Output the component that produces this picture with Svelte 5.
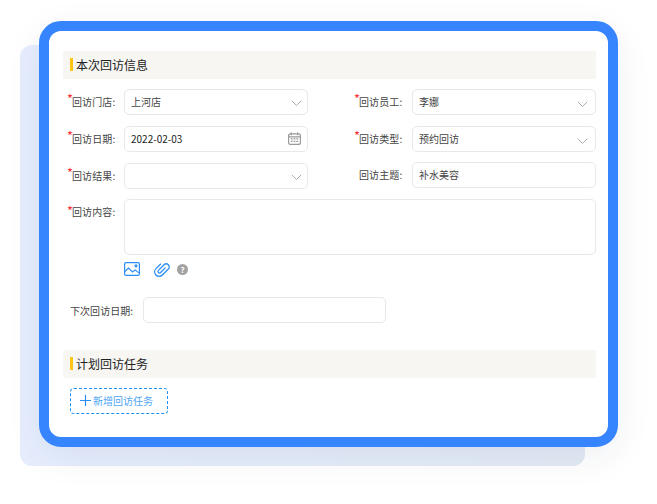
<script>
  const chevron = 'M1 1l6 6 6-6';
</script>

<div class="stage">
  <div class="backdrop"></div>
  <div class="card">
    <div class="inner">
      <h2 class="section"><span class="bar"></span>本次回访信息</h2>

      <div class="grid">
        <div class="field">
          <span class="label req">回访门店:</span>
          <div class="box">上河店
            <svg class="chev" viewBox="0 0 14 8" width="11" height="6.300"><path d={chevron} /></svg>
          </div>
        </div>
        <div class="field">
          <span class="label req">回访员工:</span>
          <div class="box">李娜
            <svg class="chev" viewBox="0 0 14 8" width="11" height="6.300"><path d={chevron} /></svg>
          </div>
        </div>
        <div class="field">
          <span class="label req">回访日期:</span>
          <div class="box date">2022-02-03
            <svg class="cal" viewBox="0 0 14 14" width="13" height="13">
              <rect x="0.6" y="2" width="12.8" height="11.4" rx="2" />
              <path d="M0.6 5.2h12.8M3.6 0.5v3M10.4 0.5v3" />
              <path class="dots" d="M3 7.5h2M6 7.5h2M9 7.5h2M3 10h2M6 10h2M9 10h2" />
            </svg>
          </div>
        </div>
        <div class="field">
          <span class="label req">回访类型:</span>
          <div class="box">预约回访
            <svg class="chev" viewBox="0 0 14 8" width="11" height="6.300"><path d={chevron} /></svg>
          </div>
        </div>
        <div class="field">
          <span class="label req">回访结果:</span>
          <div class="box">
            <svg class="chev" viewBox="0 0 14 8" width="11" height="6.300"><path d={chevron} /></svg>
          </div>
        </div>
        <div class="field up">
          <span class="label">回访主题:</span>
          <div class="box">补水美容</div>
        </div>
      </div>

      <div class="content">
        <span class="label req top">回访内容:</span>
        <div class="main">
          <div class="textarea"></div>
          <div class="tools">
            <svg class="tool" viewBox="0 0 16 14" width="16" height="14">
              <rect x="0.6" y="0.6" width="14.8" height="12.8" rx="1.5" />
              <path d="M0.8 9.500l3.700-3.400 4 3.800 2.600-2 3.800 3" />
              <circle cx="12" cy="3.800" r="1" />
            </svg>
            <svg class="tool clip" viewBox="0 0 16 16" width="16" height="16">
              <path transform="rotate(45 8 8)" d="M9.500 4.500V11.500a1.500 1.500 0 0 1-3 0V3.500a3 3 0 0 1 6 0V12a4.500 4.500 0 0 1-9 0V5" />
            </svg>
            <span class="help">?</span>
          </div>
        </div>
      </div>

      <div class="next">
        <span class="next-label">下次回访日期:</span>
        <div class="box next-box"></div>
      </div>

      <h2 class="section second"><span class="bar"></span>计划回访任务</h2>

      <div class="add">
        <svg viewBox="0 0 11 11" width="11" height="11"><path d="M5.500 0v11M0 5.500h11" /></svg>
        新增回访任务
      </div>
    </div>
  </div>
</div>

<style>
  :global(body) {
    margin: 0;
    background: #fff;
  }

  .stage {
    position: relative;
    width: 657px;
    height: 504px;
    overflow: hidden;
    padding: 21px 0 0 39px;
    box-sizing: border-box;
    font-family: "Noto Sans CJK SC", "Noto Sans", sans-serif;
    font-size: 10px;
    color: #333;
  }

  .backdrop {
    position: absolute;
    left: 20px;
    top: 45px;
    width: 565px;
    height: 421px;
    border-radius: 12px;
    background: linear-gradient(90deg, #e6eefe 0%, #e3eaf5 100%);
  }

  .card {
    position: relative;
    width: 579px;
    height: 426px;
    box-sizing: border-box;
    border: 10px solid #3685fe;
    border-radius: 22px;
    background: #fff;
    box-shadow: 0 10px 36px rgba(30, 40, 70, 0.07);
  }

  .inner {
    padding: 20px 12px 0 14px;
  }

  .section {
    display: flex;
    align-items: center;
    height: 28px;
    box-sizing: border-box;
    margin: 0;
    padding: 0 0 1px 7px;
    border-radius: 2px;
    background: #f7f6f2;
    font-size: 12px;
    font-weight: 400;
    color: #222;
  }

  .bar {
    width: 3px;
    height: 13px;
    margin-right: 3px;
    background: #fec514;
  }

  .second {
    margin-top: 27px;
  }

  .grid {
    display: grid;
    grid-template-columns: 245px 246px;
    column-gap: 42px;
    row-gap: 11px;
    margin-top: 10px;
  }

  .field {
    display: flex;
    align-items: center;
    height: 26px;
  }

  .field:nth-child(even) .label {
    flex-basis: 62px;
  }

  .field:nth-child(even) .chev {
    right: 7px;
    top: 11px;
  }

  .up {
    margin-top: -1px;
  }

  .label {
    position: relative;
    flex: 0 0 61px;
    padding-left: 9px;
    padding-bottom: 1px;
    box-sizing: border-box;
    white-space: nowrap;
    letter-spacing: 0.1px;
    color: #444;
  }

  .req::before {
    content: "*";
    position: absolute;
    left: 4px;
    top: -2px;
    color: #f5323c;
    font-size: 13px;
    line-height: 14px;
  }

  .box {
    position: relative;
    flex: 1;
    height: 26px;
    box-sizing: border-box;
    padding-left: 6px;
    border: 1px solid #e8e8e8;
    border-radius: 5px;
    background: #fff;
    line-height: 24px;
    color: #444;
  }

  .date {
    color: #222;
  }

  .chev {
    position: absolute;
    right: 5px;
    top: 10px;
    fill: none;
    stroke: #a8a8a8;
    stroke-width: 1.200;
  }

  .cal {
    position: absolute;
    right: 6px;
    top: 5px;
    fill: none;
    stroke: #999;
    stroke-width: 1.300;
  }

  .cal .dots {
    stroke-width: 1.400;
  }

  .content {
    display: flex;
    margin-top: 10px;
  }

  .top {
    padding-top: 6px;
    line-height: 14px;
  }

  .top::before {
    top: 5px;
  }

  .main {
    flex: 1;
  }

  .textarea {
    height: 56px;
    box-sizing: border-box;
    border: 1px solid #e8e8e8;
    border-radius: 5px;
  }

  .tools {
    display: flex;
    align-items: center;
    height: 16px;
    margin-top: 6px;
  }

  .tool {
    fill: none;
    stroke: #2b8ef5;
    stroke-width: 1.200;
  }

  .clip {
    margin-left: 14px;
    stroke-width: 1.300;
  }

  .help {
    width: 11px;
    height: 11px;
    margin-left: 7px;
    border-radius: 50%;
    background: #a2a2a2;
    color: #fff;
    font-size: 8px;
    font-weight: 700;
    line-height: 11px;
    text-align: center;
  }

  .next {
    display: flex;
    align-items: center;
    margin-top: 20px;
    padding-left: 7px;
  }

  .next-label {
    flex: 0 0 73px;
    white-space: nowrap;
    letter-spacing: 0.05px;
    color: #444;
  }

  .next-box {
    flex: 0 0 243px;
  }

  .add {
    display: flex;
    align-items: center;
    gap: 2px;
    width: 98px;
    height: 26px;
    box-sizing: border-box;
    margin: 10px 0 0 7px;
    padding: 0 0 1px 9px;
    border: 1px dashed #1c90f3;
    border-radius: 4px;
    color: #4ea5f5;
  }

  .add svg {
    fill: none;
    stroke: #2b8ef5;
    stroke-width: 1.200;
  }
</style>
